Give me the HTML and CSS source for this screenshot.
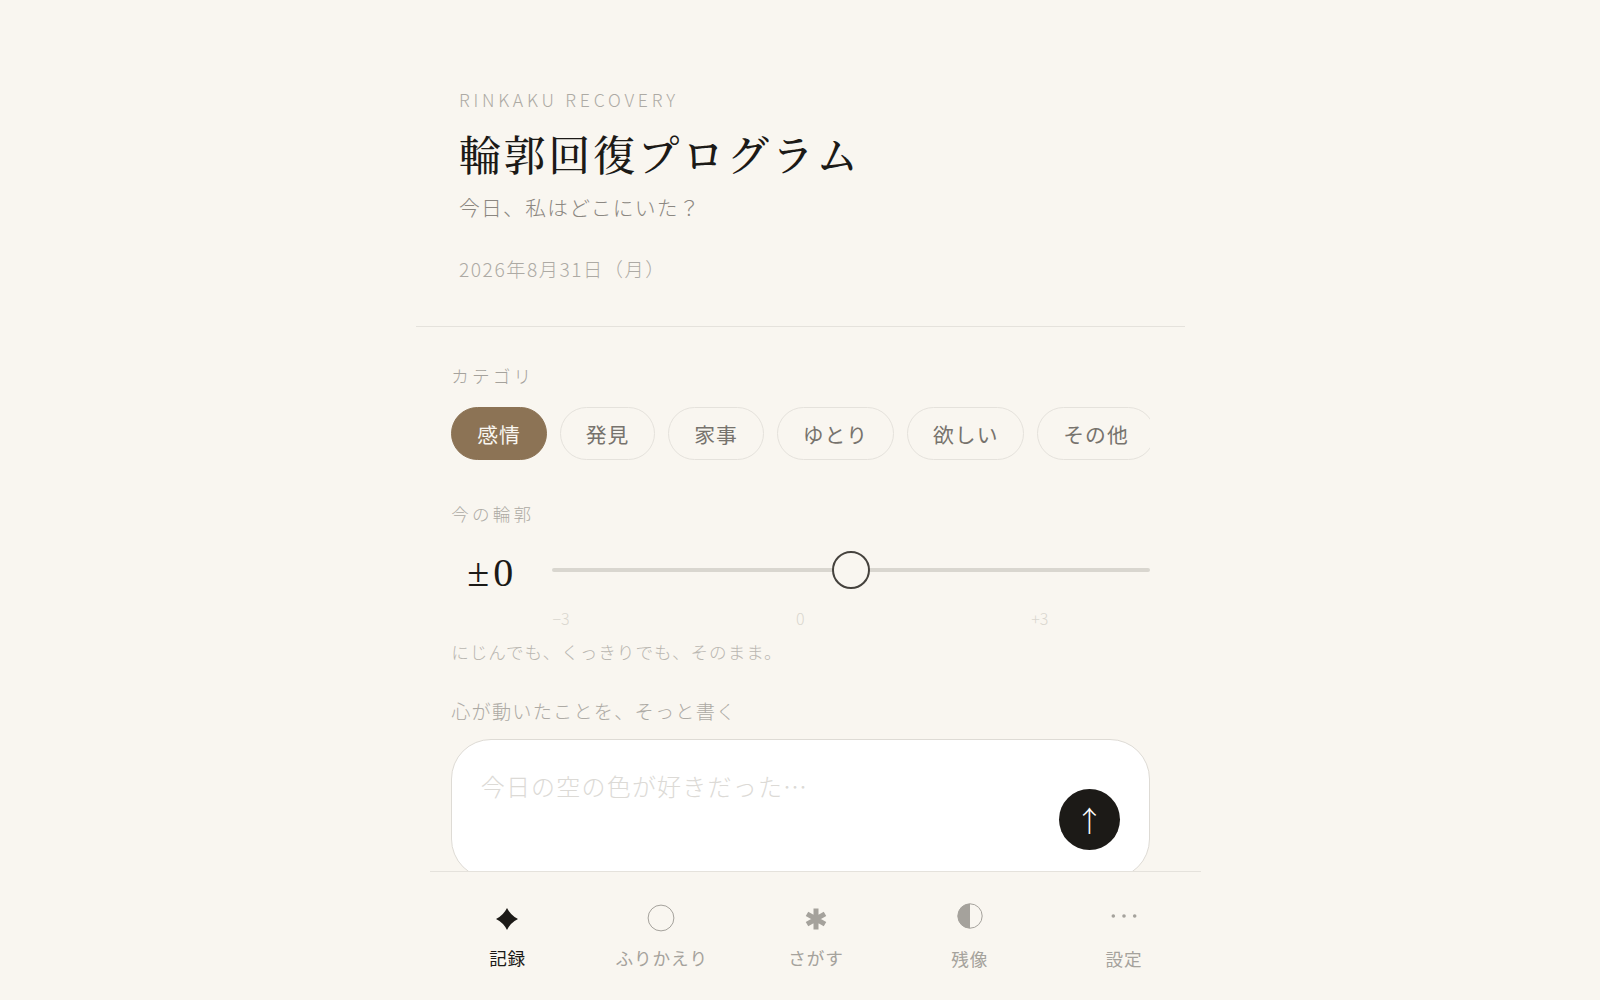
FILE: index.html
```html
<!DOCTYPE html>
<html lang="ja">
<head>
    <meta charset="UTF-8">
    <meta name="viewport" content="width=device-width, initial-scale=1.0">
    <title>輪郭回復プログラム</title>
    <link rel="stylesheet" href="styles.css">
</head>
<body>
    <div class="app">
        <!-- ヘッダー -->
        <header class="header">
            <p class="eyebrow">RINKAKU RECOVERY</p>
            <h1>輪郭回復プログラム</h1>
            <p class="subtitle">今日、私はどこにいた？</p>
            <p class="date">2026年8月31日（月）</p>
        </header>

        <main class="content">
            <!-- カテゴリ -->
            <p class="label">カテゴリ</p>
            <div class="chips">
                <button class="chip active">感情</button>
                <button class="chip">発見</button>
                <button class="chip">家事</button>
                <button class="chip">ゆとり</button>
                <button class="chip">欲しい</button>
                <button class="chip">その他</button>
            </div>

            <!-- 今の輪郭 -->
            <p class="label label-outline">今の輪郭</p>
            <div class="slider-row">
                <span class="slider-value">±0</span>
                <input class="slider" type="range" min="-3" max="3" value="0">
            </div>
            <div class="ticks">
                <span>−3</span>
                <span>0</span>
                <span>+3</span>
            </div>
            <p class="hint">にじんでも、くっきりでも、そのまま。</p>

            <!-- 入力 -->
            <p class="label label-note">心が動いたことを、そっと書く</p>
            <div class="note-box">
                <textarea class="note" placeholder="今日の空の色が好きだった…"></textarea>
                <button class="send">↑</button>
            </div>
        </main>
    </div>

    <!-- ナビ -->
    <nav class="nav">
        <a class="nav-item active">
            <svg class="nav-icon" viewBox="0 0 30 30"><path d="M15 4Q18.6 11.4 26 15Q18.6 18.6 15 26Q11.4 18.6 4 15Q11.4 11.4 15 4Z" fill="currentColor"/></svg>
            <span>記録</span>
        </a>
        <a class="nav-item">
            <svg class="nav-icon" viewBox="0 0 30 30"><circle cx="15" cy="14" r="12.9" fill="none" stroke="currentColor" stroke-width="1"/></svg>
            <span>ふりかえり</span>
        </a>
        <a class="nav-item">
            <svg class="nav-icon" viewBox="0 0 30 30"><path d="M15 4.5V25.5M6 9.8L24 20.2M24 9.8L6 20.2" fill="none" stroke="currentColor" stroke-width="5"/></svg>
            <span>さがす</span>
        </a>
        <a class="nav-item low">
            <svg class="nav-icon" viewBox="0 0 30 30"><circle cx="15" cy="12" r="12.2" fill="none" stroke="currentColor" stroke-width="1"/><path d="M15 -0.2A12.2 12.2 0 0 0 15 24.2Z" fill="currentColor"/></svg>
            <span>残像</span>
        </a>
        <a class="nav-item low">
            <svg class="nav-icon" viewBox="0 0 30 30"><circle cx="4.3" cy="12" r="1.8" fill="currentColor"/><circle cx="15" cy="12" r="1.8" fill="currentColor"/><circle cx="25.7" cy="12" r="1.8" fill="currentColor"/></svg>
            <span>設定</span>
        </a>
    </nav>
</body>
</html>
```

FILE: styles.css
```css
* { margin: 0; padding: 0; box-sizing: border-box; }
html, body { height: 100%; }
body {
    font-family: "Noto Sans CJK JP", "Noto Sans", sans-serif;
    font-weight: 300;
    background: #f9f6f0;
    color: #1c1a17;
    overflow: hidden;
}
.app {
    width: 769px;
    height: 1000px;
    margin-left: 416px;
    overflow: hidden;
}

/* header */
.header {
    padding: 88px 43px 43px;
    border-bottom: 1.6px solid #e5e2dc;
}
.eyebrow {
    font-size: 17.6px;
    line-height: 24px;
    letter-spacing: 0.215em;
    color: #adaaa4;
}
h1 {
    margin-top: 13px;
    font-family: "Noto Serif CJK JP", "Liberation Serif", serif;
    font-size: 41.6px;
    font-weight: 500;
    line-height: 56px;
    letter-spacing: 0.075em;
    white-space: nowrap;
}
.subtitle {
    margin-top: 11px;
    font-size: 20.8px;
    line-height: 30px;
    letter-spacing: 0.06em;
    color: #8b8781;
}
.date {
    margin-top: 33px;
    font-size: 19.2px;
    line-height: 28px;
    letter-spacing: 0.08em;
    color: #adaaa4;
}

/* content */
.content { padding: 36px 34.6px 0 35.2px; }
.label {
    font-size: 17.6px;
    line-height: 26px;
    letter-spacing: 0.18em;
    color: #a5a29c;
}
.label-outline { margin-top: 40.7px; color: #adaaa4; }
.label-note {
    margin-top: 33px;
    font-size: 19.2px;
    letter-spacing: 0.062em;
    color: #adaaa4;
}

.chips {
    display: flex;
    gap: 12.8px;
    margin-top: 17.7px;
    overflow: hidden;
}
.chip {
    flex-shrink: 0;
    height: 53.6px;
    padding: 2px 25px 0;
    border: 1.6px solid #e5e2dc;
    border-radius: 27px;
    background: transparent;
    color: #77736d;
    font-family: inherit;
    font-size: 20.8px;
    font-weight: 400;
    letter-spacing: 0.05em;
}
.chip.active {
    background: #8c7355;
    border-color: #8c7355;
    color: #f9f6f0;
}

/* slider */
.slider-row {
    display: flex;
    align-items: center;
    gap: 24.8px;
    height: 40px;
    margin-top: 23px;
}
.slider-value {
    width: 76px;
    padding: 6px 0 0 16px;
    font-family: "Liberation Serif", serif;
    font-size: 40px;
    font-weight: 400;
    letter-spacing: 0.1em;
    white-space: nowrap;
}
.slider {
    flex: 1;
    height: 40px;
    background: transparent;
    -webkit-appearance: none;
    appearance: none;
}
.slider::-webkit-slider-runnable-track {
    height: 4px;
    border-radius: 2px;
    background: #d9d6cf;
}
.slider::-webkit-slider-thumb {
    -webkit-appearance: none;
    width: 38.4px;
    height: 38.4px;
    margin-top: -17.2px;
    border: 2.4px solid #45423d;
    border-radius: 50%;
    background: #f9f6f0;
}
.ticks {
    display: flex;
    justify-content: space-between;
    width: 496px;
    margin: 17px 0 0 101.2px;
    font-size: 16px;
    line-height: 22px;
    color: #d9d6cf;
}
.hint {
    margin-top: 10px;
    font-size: 17.6px;
    line-height: 26px;
    letter-spacing: 0.055em;
    color: #bab7b1;
}

/* note */
.note-box {
    position: relative;
    height: 140px;
    margin-top: 15.5px;
    border: 1.6px solid #dedbd5;
    border-radius: 40px;
    background: #fff;
}
.note {
    display: block;
    width: 100%;
    height: 100%;
    padding: 28px 100px 0 28.5px;
    border: none;
    outline: none;
    resize: none;
    background: transparent;
    font-family: inherit;
    font-size: 24px;
    font-weight: 300;
    line-height: 36px;
    letter-spacing: 0.05em;
}
.note::placeholder { color: #dcdad6; opacity: 1; }
.send {
    position: absolute;
    right: 29.5px;
    top: 49px;
    width: 61px;
    height: 61px;
    border: none;
    border-radius: 50%;
    background: #1c1a17;
    color: #fff;
    font-family: inherit;
    font-size: 28.8px;
    font-weight: 300;
    line-height: 61px;
}

/* nav */
.nav {
    position: fixed;
    left: 430px;
    bottom: 0;
    display: flex;
    width: 771px;
    height: 129px;
    border-top: 1.6px solid #e5e2dc;
    background: #f9f6f0;
}
.nav-item {
    flex: 1;
    display: flex;
    flex-direction: column;
    align-items: center;
    padding-top: 32px;
    color: #a5a29c;
    font-size: 17.6px;
    font-weight: 400;
    line-height: 26px;
    letter-spacing: 0.05em;
}
.nav-item span { margin-left: 1px; }
.nav-item.active { color: #1c1a17; }
.nav-item.low span { margin: 1px 0 0; }
.nav-icon {
    display: block;
    width: 30px;
    height: 30px;
    margin-bottom: 11px;
    overflow: visible;
}
```
